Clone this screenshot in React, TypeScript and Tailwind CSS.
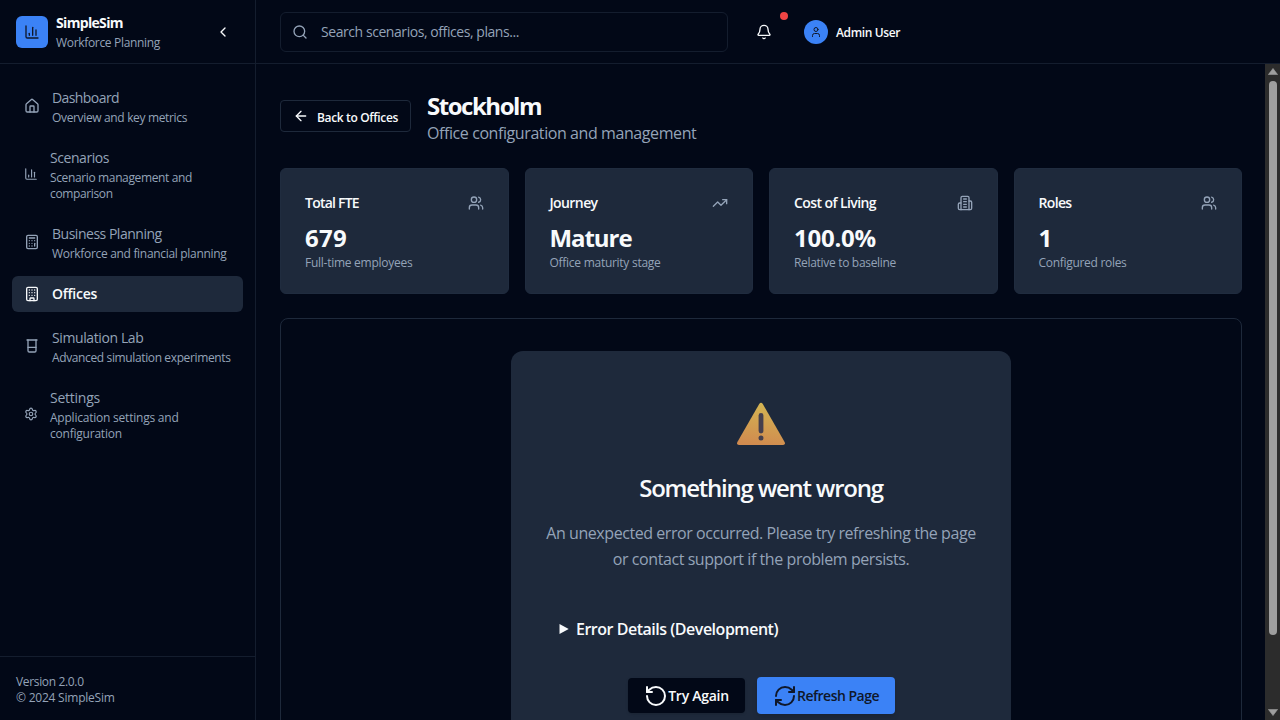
import type { ComponentType } from "react";
import {
  ArrowLeft,
  Beaker,
  Bell,
  Building,
  Calculator,
  ChartColumn,
  ChevronLeft,
  House,
  RefreshCw,
  RotateCcw,
  Search,
  Settings,
  TrendingUp,
  User,
  Users,
} from "lucide-react";

type Icon = ComponentType<{ className?: string }>;

type NavEntry = {
  title: string;
  titleTracking: string;
  icon: Icon;
  iconClass?: string;
  lines?: { text: string; tracking: string }[];
  active?: boolean;
};

const navEntries: NavEntry[] = [
  {
    title: "Dashboard",
    titleTracking: "tracking-[-0.0417em]",
    icon: House,
    lines: [{ text: "Overview and key metrics", tracking: "tracking-[-0.0289em]" }],
  },
  {
    title: "Scenarios",
    titleTracking: "tracking-[-0.0314em]",
    icon: ChartColumn,
    iconClass: "w-[14px]",
    lines: [
      { text: "Scenario management and", tracking: "tracking-[-0.0304em]" },
      { text: "comparison", tracking: "tracking-[-0.0304em]" },
    ],
  },
  {
    title: "Business Planning",
    titleTracking: "tracking-[-0.0345em]",
    icon: Calculator,
    lines: [{ text: "Workforce and financial planning", tracking: "tracking-[-0.026em]" }],
  },
  { title: "Offices", titleTracking: "tracking-[-0.0192em]", icon: Building, active: true },
  {
    title: "Simulation Lab",
    titleTracking: "tracking-[-0.028em]",
    icon: Beaker,
    lines: [{ text: "Advanced simulation experiments", tracking: "tracking-[-0.031em]" }],
  },
  {
    title: "Settings",
    titleTracking: "tracking-[-0.0171em]",
    icon: Settings,
    iconClass: "w-[14px]",
    lines: [
      { text: "Application settings and", tracking: "tracking-[-0.0185em]" },
      { text: "configuration", tracking: "tracking-[-0.0185em]" },
    ],
  },
];

function OfficeTower({ className }: { className?: string }) {
  return (
    <svg
      viewBox="0 0 24 24"
      fill="none"
      stroke="currentColor"
      strokeWidth="2"
      strokeLinecap="round"
      strokeLinejoin="round"
      className={className}
    >
      <path d="M6 22V4a2 2 0 0 1 2-2h8a2 2 0 0 1 2 2v18Z" />
      <path d="M6 12H4a2 2 0 0 0-2 2v6a2 2 0 0 0 2 2h2" />
      <path d="M18 9h2a2 2 0 0 1 2 2v9a2 2 0 0 1-2 2h-2" />
      <path d="M10 6h4M10 10h4M10 14h4M10 18h4" />
    </svg>
  );
}

const stats = [
  {
    title: "Total FTE",
    titleTracking: "tracking-[-0.055em]",
    value: "679",
    valueTracking: "tracking-[0.0116em]",
    note: "Full-time employees",
    noteTracking: "tracking-[-0.022em]",
    icon: Users,
  },
  {
    title: "Journey",
    titleTracking: "tracking-[-0.042em]",
    value: "Mature",
    valueTracking: "tracking-[-0.0444em]",
    note: "Office maturity stage",
    noteTracking: "tracking-[-0.0226em]",
    icon: TrendingUp,
  },
  {
    title: "Cost of Living",
    titleTracking: "tracking-[-0.042em]",
    value: "100.0%",
    valueTracking: "tracking-[-0.0094em]",
    note: "Relative to baseline",
    noteTracking: "tracking-[-0.026em]",
    icon: OfficeTower,
  },
  {
    title: "Roles",
    titleTracking: "tracking-[-0.047em]",
    value: "1",
    valueTracking: "tracking-normal",
    note: "Configured roles",
    noteTracking: "tracking-[-0.0249em]",
    icon: Users,
  },
];

function NavItem({ title, titleTracking, icon: Icon, iconClass, lines, active }: NavEntry) {
  return (
    <a
      className={
        active
          ? "flex items-center gap-3 whitespace-nowrap rounded-md bg-[#1e293b] px-3 py-2 text-[#f8fafc]"
          : "flex items-center gap-3 whitespace-nowrap rounded-md px-3 py-2 text-[#94a3b8]"
      }
    >
      <Icon className={`h-4 shrink-0 ${iconClass ?? "w-4"}`} />
      <div>
        <div className={`text-sm ${active ? "font-semibold" : ""} ${titleTracking}`}>{title}</div>
        {lines && (
          <div className="mt-[1.5px] -mb-[1.5px]">
            {lines.map((line) => (
              <div key={line.text} className={`text-xs ${line.tracking}`}>
                {line.text}
              </div>
            ))}
          </div>
        )}
      </div>
    </a>
  );
}

function Sidebar() {
  return (
    <aside className="flex w-64 shrink-0 flex-col border-r border-[#141d2e] bg-[#020817]">
      <div className="flex h-16 shrink-0 items-center justify-between border-b border-[#141d2e] px-4">
        <div className="flex items-center gap-2">
          <div className="flex size-8 items-center justify-center rounded-md bg-[#3b82f6] text-[#0f172a]">
            <ChartColumn className="size-4" />
          </div>
          <div className="whitespace-nowrap">
            <div className="text-sm font-bold tracking-[-0.048em] text-[#f8fafc]">SimpleSim</div>
            <div className="mt-px -mb-px text-xs leading-[18px] tracking-[-0.0269em] text-[#94a3b8]">
              Workforce Planning
            </div>
          </div>
        </div>
        <button className="flex size-8 items-center justify-center text-[#f8fafc]">
          <ChevronLeft className="size-4" />
        </button>
      </div>
      <nav className="flex flex-1 flex-col gap-2 px-3 pt-4">
        {navEntries.map((entry) => (
          <NavItem key={entry.title} {...entry} />
        ))}
      </nav>
      <div className="h-16 shrink-0 whitespace-nowrap border-t border-[#141d2e] px-4 pt-[17px] text-xs text-[#94a3b8]">
        <div className="tracking-[-0.0285em]">Version 2.0.0</div>
        <div className="tracking-[-0.0185em]">© 2024 SimpleSim</div>
      </div>
    </aside>
  );
}

function Header() {
  return (
    <header className="flex h-16 shrink-0 items-center border-b border-[#141d2e] px-6">
      <div className="flex h-10 w-[448px] items-center gap-[13px] rounded-md border border-[#141d2e] pr-3 pl-[11px] text-[#94a3b8]">
        <Search className="size-4" />
        <span className="whitespace-nowrap text-sm tracking-[-0.0311em]">
          Search scenarios, offices, plans...
        </span>
      </div>
      <button className="relative ml-4 flex size-10 items-center justify-center text-[#f8fafc]">
        <Bell className="size-4" />
        <span className="absolute top-0 -right-1 size-2 rounded-full bg-[#ef4444]" />
      </button>
      <div className="ml-5 flex items-center gap-2">
        <div className="flex size-6 items-center justify-center rounded-full bg-[#3b82f6] text-[#0f172a]">
          <User className="size-3" />
        </div>
        <span className="whitespace-nowrap pt-0.5 text-xs font-semibold tracking-[-0.031em] text-[#f8fafc]">
          Admin User
        </span>
      </div>
    </header>
  );
}

function WarningSign() {
  return (
    <svg width="48" height="44" viewBox="0 0 48 44" className="block">
      <defs>
        <linearGradient id="warning-fill" x1="0.6" y1="0" x2="0.45" y2="1">
          <stop offset="0" stopColor="#d3b552" />
          <stop offset="1" stopColor="#d18b4f" />
        </linearGradient>
      </defs>
      <path
        d="M22.2 2.1Q24 -0.6 25.8 2.1L47.6 40.1Q48.8 43 46 43H2Q-0.8 43 0.4 40.1Z"
        fill="url(#warning-fill)"
      />
      <rect x="21.6" y="11" width="4.8" height="20.5" rx="2.4" fill="#453f4d" />
      <circle cx="24" cy="36" r="2.5" fill="#453f4d" />
    </svg>
  );
}

function ErrorCard() {
  return (
    <div className="flex h-[440px] w-[500px] flex-col items-center rounded-xl bg-[#1e293b] pt-[51px]">
      <WarningSign />
      <h2 className="mt-[26px] whitespace-nowrap text-2xl font-semibold tracking-[-0.0516em] text-[#f8fafc]">
        Something went wrong
      </h2>
      <div className="mt-4 whitespace-nowrap text-center text-base leading-[26px] text-[#94a3b8]">
        <p className="tracking-[-0.0275em]">
          An unexpected error occurred. Please try refreshing the page
        </p>
        <p className="tracking-[-0.0265em]">or contact support if the problem persists.</p>
      </div>
      <div className="mt-[45px] flex w-full items-center gap-[7px] pl-12 text-[#f8fafc]">
        <svg width="10" height="10" viewBox="0 0 10 10">
          <path d="M0.5 0L9.7 5L0.5 10Z" fill="currentColor" />
        </svg>
        <span className="whitespace-nowrap text-base font-semibold tracking-[-0.0301em]">
          Error Details (Development)
        </span>
      </div>
      <div className="mt-9 flex items-center gap-3 whitespace-nowrap pl-px text-sm font-semibold">
        <button className="flex h-[35px] w-[117px] items-center justify-center rounded-[4px] bg-[#020817] text-[#f8fafc] shadow-sm">
          <RotateCcw className="size-6" />
          <span className="tracking-[-0.0199em]">Try Again</span>
        </button>
        <button className="flex h-[37px] w-[138px] items-center justify-center rounded-[4px] bg-[#3b82f6] text-[#0f172a] shadow-md">
          <RefreshCw className="size-6" />
          <span className="tracking-[-0.0362em]">Refresh Page</span>
        </button>
      </div>
    </div>
  );
}

function Scrollbar() {
  return (
    <div className="flex w-[15px] shrink-0 flex-col items-center bg-[#2c2c2c] pt-1 pb-1">
      <svg width="10" height="7" viewBox="0 0 10 7" className="shrink-0">
        <path
          d="M5 0.4L9.6 6.6H0.4Z"
          fill="#9f9f9f"
          stroke="#9f9f9f"
          strokeLinejoin="round"
          strokeWidth="0.6"
        />
      </svg>
      <div className="mt-1.5 h-[554px] w-2 shrink-0 rounded-full bg-[#9f9f9f]" />
      <div className="flex-1" />
      <svg width="10" height="7" viewBox="0 0 10 7" className="shrink-0">
        <path
          d="M5 6.6L9.6 0.4H0.4Z"
          fill="#9f9f9f"
          stroke="#9f9f9f"
          strokeLinejoin="round"
          strokeWidth="0.6"
        />
      </svg>
    </div>
  );
}

function OfficePage() {
  return (
    <main className="min-w-0 flex-1 overflow-hidden py-6 pr-[23px] pl-6">
      <div className="flex h-14 items-center gap-4">
        <button className="flex h-8 w-[131px] items-center gap-2 rounded-[4px] border border-[#1e293b] pl-3 text-[#f8fafc]">
          <ArrowLeft className="size-4" />
          <span className="whitespace-nowrap pt-[3px] text-xs font-semibold tracking-[-0.0288em]">
            Back to Offices
          </span>
        </button>
        <div className="whitespace-nowrap pt-[3px]">
          <h1 className="text-2xl leading-[31px] font-bold tracking-[-0.0613em] text-[#f8fafc]">
            Stockholm
          </h1>
          <p className="text-base tracking-[-0.026em] text-[#94a3b8]">
            Office configuration and management
          </p>
        </div>
      </div>
      <div className="mt-6 grid grid-cols-4 gap-4">
        {stats.map(({ icon: Icon, ...stat }) => (
          <section
            key={stat.title}
            className="h-[126px] whitespace-nowrap rounded-md border border-[#202c3f] bg-[#1e293b] px-6 pt-6"
          >
            <div className="flex h-5 items-center justify-between">
              <h3 className={`text-sm font-semibold text-[#f8fafc] ${stat.titleTracking}`}>
                {stat.title}
              </h3>
              <Icon className="size-4 text-[#94a3b8]" />
            </div>
            <div className={`mt-[9px] text-2xl font-bold text-[#f8fafc] ${stat.valueTracking}`}>
              {stat.value}
            </div>
            <p className={`mt-px text-xs text-[#94a3b8] ${stat.noteTracking}`}>{stat.note}</p>
          </section>
        ))}
      </div>
      <div className="mt-6 flex h-[520px] justify-center rounded-lg border border-[#1e293b] pt-8">
        <ErrorCard />
      </div>
    </main>
  );
}

export default function App() {
  return (
    <div className="flex h-[720px] w-[1280px] overflow-hidden bg-[#020817] font-['Open_Sans',sans-serif]">
      <Sidebar />
      <div className="flex min-w-0 flex-1 flex-col">
        <Header />
        <div className="flex min-h-0 flex-1">
          <OfficePage />
          <Scrollbar />
        </div>
      </div>
    </div>
  );
}
